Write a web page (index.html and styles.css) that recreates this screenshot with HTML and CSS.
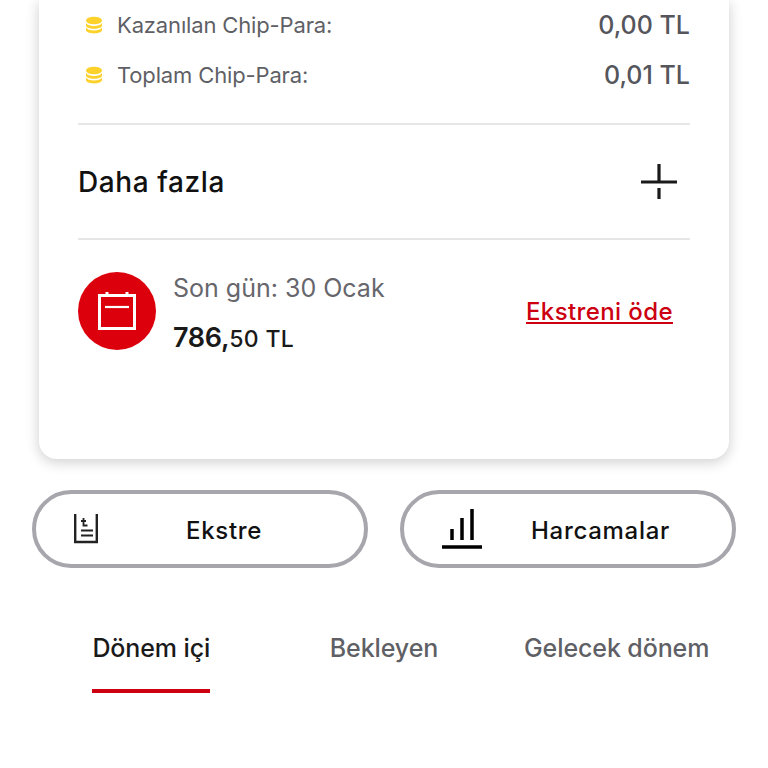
FILE: index.html
```html
<!DOCTYPE html>
<html lang="tr">
<head>
<meta charset="utf-8">
<title>Kart</title>
<link rel="stylesheet" href="styles.css">
</head>
<body>
<main class="page">
  <section class="card">
    <div class="chip-list">
      <div class="chip-row">
        <svg class="coin" viewBox="0 0 18 18"><ellipse cx="9" cy="4.500" rx="8" ry="3.800" fill="#fcd12a"/><path d="M1 7c1 2 4 2.900 8 2.900S16 9 17 7v2.500c0 1.900-3.600 3.300-8 3.300s-8-1.400-8-3.300z" fill="#fcd12a"/><path d="M1 11.500c1 2 4 2.900 8 2.900s7-.9 8-2.900V14c0 1.900-3.600 3.400-8 3.400S1 15.900 1 14z" fill="#fcd12a"/></svg>
        <span class="chip-label">Kazanılan Chip-Para:</span>
        <span class="chip-value">0,00 TL</span>
      </div>
      <div class="chip-row">
        <svg class="coin" viewBox="0 0 18 18"><ellipse cx="9" cy="4.500" rx="8" ry="3.800" fill="#fcd12a"/><path d="M1 7c1 2 4 2.900 8 2.900S16 9 17 7v2.500c0 1.900-3.600 3.300-8 3.300s-8-1.400-8-3.300z" fill="#fcd12a"/><path d="M1 11.500c1 2 4 2.900 8 2.900s7-.9 8-2.900V14c0 1.900-3.600 3.400-8 3.400S1 15.900 1 14z" fill="#fcd12a"/></svg>
        <span class="chip-label">Toplam Chip-Para:</span>
        <span class="chip-value">0,01 TL</span>
      </div>
    </div>
    <div class="more">
      <span>Daha fazla</span>
      <svg class="plus" viewBox="0 0 36 36"><path d="M0 18h36M18 0v18M18 24v11" fill="none" stroke="#1a1a1a" stroke-width="3.200"/></svg>
    </div>
    <div class="due">
      <div class="due-icon">
        <svg viewBox="0 0 40 40" class="due-svg"><path d="M2.500 4.500h35v33h-35z" fill="none" stroke="#fff" stroke-width="3"/><path d="M10 1v5M30 1v5" fill="none" stroke="#fff" stroke-width="3"/><path d="M8 16h24" fill="none" stroke="#fff" stroke-width="2.200"/></svg>
      </div>
      <div class="due-text">
        <div class="due-date">Son gün: 30 Ocak</div>
        <div class="due-amount">786,<small>50 TL</small></div>
      </div>
      <a class="pay" href="#">Ekstreni öde</a>
    </div>
  </section>
  <div class="actions">
    <button class="action">
      <svg class="action-icon-a" viewBox="0 0 24 30"><path d="M1.200 0v28h21.600V0" fill="none" stroke="#222" stroke-width="2.400"/><path d="M7 16.500h12M7 21.500h12" stroke="#222" stroke-width="2"/><path d="M9.500 4v7.500h4M7 7h5" fill="none" stroke="#222" stroke-width="1.800"/></svg>
      <span class="action-label label-ekstre">Ekstre</span>
    </button>
    <button class="action">
      <svg class="action-icon-b" viewBox="0 0 40 40"><path d="M10 20v11M20 9v22M30 0v31M0 38h40" fill="none" stroke="#000" stroke-width="3.500"/></svg>
      <span class="action-label label-harcamalar">Harcamalar</span>
    </button>
  </div>
  <nav class="tabs">
    <div class="tab active"><span>Dönem içi</span></div>
    <div class="tab"><span>Bekleyen</span></div>
    <div class="tab"><span>Gelecek dönem</span></div>
  </nav>
</main>
</body>
</html>
```
FILE: styles.css
```css
* { box-sizing: border-box; }
html, body { margin: 0; padding: 0; background: #fff; }
body { width: 768px; height: 768px; overflow: hidden; font-family: "Inter", "Liberation Sans", sans-serif; color: #111; }
.page { display: flex; flex-direction: column; }
.card { margin: 0 39px; height: 459px; padding: 0 39px; background: #fff; border-radius: 0 0 18px 18px; box-shadow: 0 3px 14px rgba(0,0,0,.2); }
.chip-list { display: flex; flex-direction: column; gap: 10px; height: 125px; border-bottom: 2px solid #e6e6e6; }
.chip-row { display: flex; align-items: center; height: 40px; }
.chip-row:first-child { margin-top: 5px; }
.coin { width: 18px; height: 18px; margin: 0 14px 0 7px; flex: none; }
.chip-label { flex: 1; font-size: 22px; color: #5f5f66; letter-spacing: -.15px; }
.chip-value { font-size: 25px; font-weight: 500; color: #55555c; }
.more { display: flex; align-items: center; justify-content: space-between; height: 115px; border-bottom: 2px solid #e6e6e6; font-size: 28px; font-weight: 500; color: #111; padding-right: 13px; letter-spacing: .6px; }
.plus { width: 36px; height: 36px; }
.due { display: flex; align-items: flex-start; padding: 32px 17px 0 0; }
.due-icon { width: 78px; height: 78px; border-radius: 50%; background: #dc000c; display: flex; align-items: center; justify-content: center; flex: none; }
.due-svg { width: 40px; height: 40px; }
.due-text { flex: 1; margin-left: 17px; }
.due-date { font-size: 25px; color: #66666c; line-height: 32px; }
.due-amount { font-size: 27px; font-weight: 600; line-height: 36px; margin-top: 16px; color: #1a1a1a; letter-spacing: -.3px; }
.due-amount small { font-size: 23px; font-weight: 500; letter-spacing: .3px; }
.pay { color: #cc0010; font-size: 24px; font-weight: 500; line-height: 80px; text-decoration: underline; letter-spacing: .4px; }
.actions { display: flex; gap: 32px; margin: 31px 32px 0; }
.action { flex: 1; height: 78px; border: 4px solid #a6a6ac; border-radius: 39px; background: #fff; display: flex; align-items: center; padding: 0; font: inherit; }
.action-label { padding-top: 2px; font-size: 24px; font-weight: 500; color: #111; letter-spacing: .7px; }
.label-ekstre { margin-left: 88px; }
.label-harcamalar { margin-left: 49px; }
.action-icon-a { width: 24px; height: 30px; margin-left: 38px; }
.action-icon-b { width: 40px; height: 40px; margin-left: 38px; }
.tabs { display: grid; grid-template-columns: repeat(3, 1fr); margin: 58px 35px 0; }
.tab { display: flex; justify-content: center; font-size: 25px; font-weight: 500; color: #5f5f66; letter-spacing: -.1px; }
.tab span { display: block; padding: 4px 0 23px; line-height: 36px; border-bottom: 4px solid transparent; }
.tab.active { color: #1a1a1a; }
.tab.active span { border-bottom-color: #cc0010; }
```
